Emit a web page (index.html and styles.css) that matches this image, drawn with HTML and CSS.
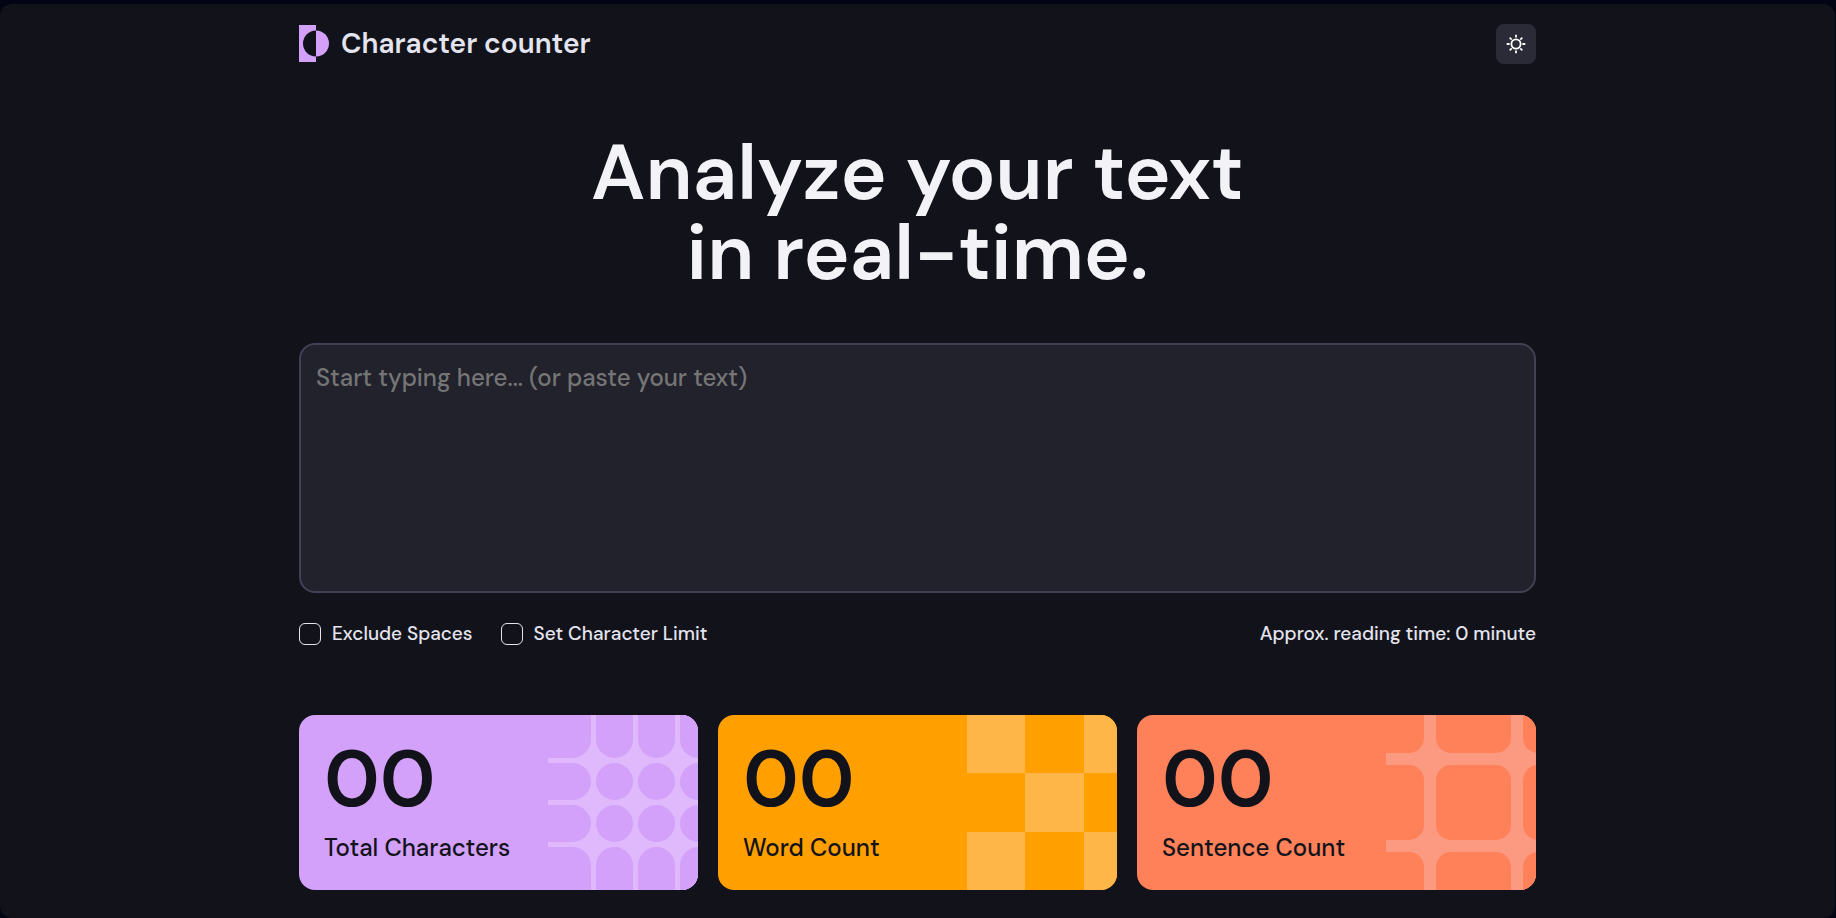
FILE: index.html
```html
<!DOCTYPE html>
<html lang="en">
<head>
  <meta charset="utf-8">
  <meta name="viewport" content="width=device-width, initial-scale=1">
  <title>Character counter</title>
  <link rel="stylesheet" href="styles.css">
</head>
<body>
  <div class="page">
    <div class="container">
      <header class="header">
        <a class="brand" href="#">
          <svg class="brand-mark" width="30" height="38" viewBox="0 0 30 38" aria-hidden="true">
            <path fill="#d3a0fa" fill-rule="evenodd" d="M0 0H17V5.500A13 13 0 0 0 17 31.500V37H0Z"/>
            <path fill="#d3a0fa" d="M17 5.500A13 13 0 0 1 17 31.500Z"/>
          </svg>
          <span class="brand-name">Character counter</span>
        </a>
        <button class="theme-toggle" type="button" aria-label="Toggle theme">
          <svg width="20" height="20" viewBox="0 0 20 20" fill="none" stroke="#fff" stroke-width="1.800" aria-hidden="true">
            <circle cx="10" cy="10" r="4.600"/>
            <path d="M10 .7v2.900M10 16.400v2.900M.7 10h2.900M16.400 10h2.900M3.700 3.700l2 2M14.300 14.300l2 2M3.700 16.300l2-2M14.300 5.700l2-2"/>
          </svg>
        </button>
      </header>

      <main>
        <h1 class="title">Analyze your text<br>in real-time.</h1>
        <textarea class="editor" aria-label="Text to analyze" placeholder="Start typing here... (or paste your text)"></textarea>

        <div class="options">
          <label class="option"><input class="checkbox" type="checkbox">Exclude Spaces</label>
          <label class="option"><input class="checkbox" type="checkbox">Set Character Limit</label>
          <p class="reading-time">Approx. reading time: 0 minute</p>
        </div>

        <section class="cards" aria-label="Statistics">
          <article class="card card-purple">
            <svg class="pattern" viewBox="0 0 150 175" aria-hidden="true">
              <rect class="pattern-light" width="150" height="175"/>
              <g class="pattern-base">
                <rect x="-40" y="-40" width="83" height="83" rx="18.500"/>
                <rect x="48" y="-40" width="37" height="83" rx="18.500"/>
                <rect x="90" y="-40" width="37" height="83" rx="18.500"/>
                <rect x="132" y="-40" width="37" height="83" rx="18.500"/>
                <rect x="-40" y="48" width="83" height="37" rx="18.500"/>
                <circle cx="66.500" cy="66.500" r="18.500"/>
                <circle cx="108.500" cy="66.500" r="18.500"/>
                <circle cx="150.500" cy="66.500" r="18.500"/>
                <rect x="-40" y="90" width="83" height="37" rx="18.500"/>
                <circle cx="66.500" cy="108.500" r="18.500"/>
                <circle cx="108.500" cy="108.500" r="18.500"/>
                <circle cx="150.500" cy="108.500" r="18.500"/>
                <rect x="-40" y="132" width="83" height="83" rx="18.500"/>
                <rect x="48" y="132" width="37" height="83" rx="18.500"/>
                <rect x="90" y="132" width="37" height="83" rx="18.500"/>
                <rect x="132" y="132" width="37" height="83" rx="18.500"/>
              </g>
            </svg>
            <p class="count">00</p>
            <h2 class="card-label">Total Characters</h2>
          </article>
          <article class="card card-orange">
            <svg class="pattern" viewBox="0 0 150 175" aria-hidden="true">
              <path class="pattern-light" d="M0 0h58v58H0zM117 0h33v58h-33zM58 58h59v59H58zM0 117h58v58H0zM117 117h33v58h-33z"/>
            </svg>
            <p class="count">00</p>
            <h2 class="card-label">Word Count</h2>
          </article>
          <article class="card card-coral">
            <svg class="pattern" viewBox="0 0 150 175" aria-hidden="true">
              <rect class="pattern-light" width="150" height="175"/>
              <g class="pattern-base">
                <rect x="-40" y="-40" width="78" height="78" rx="15"/>
                <rect x="50" y="-40" width="75" height="78" rx="15"/>
                <rect x="137" y="-40" width="75" height="78" rx="15"/>
                <rect x="-40" y="50" width="78" height="75" rx="15"/>
                <rect x="50" y="50" width="75" height="75" rx="15"/>
                <rect x="137" y="50" width="75" height="75" rx="15"/>
                <rect x="-40" y="137" width="78" height="78" rx="15"/>
                <rect x="50" y="137" width="75" height="78" rx="15"/>
                <rect x="137" y="137" width="75" height="78" rx="15"/>
              </g>
            </svg>
            <p class="count">00</p>
            <h2 class="card-label">Sentence Count</h2>
          </article>
        </section>
      </main>
    </div>
  </div>
</body>
</html>
```
FILE: styles.css
```css
*, *::before, *::after {
  box-sizing: border-box;
}

body {
  margin: 0;
  padding: 4px 1px 0 0;
  background: #030414;
  color: #e4e4ef;
  font-family: "DM Sans", Inter, "Open Sans", sans-serif;
}

h1, h2, p {
  margin: 0;
}

.page {
  min-height: calc(100vh - 4px);
  padding: 20px 24px 28px;
  border-radius: 12px;
  background: #12131a;
}

.container {
  max-width: 1237px;
  margin: 0 auto;
}

.header {
  display: flex;
  align-items: center;
  justify-content: space-between;
}

.brand {
  display: flex;
  align-items: center;
  gap: 12px;
  color: inherit;
  text-decoration: none;
}

.brand-name {
  font-size: 28px;
  font-weight: 600;
  line-height: 38px;
}

.theme-toggle {
  display: grid;
  place-items: center;
  width: 40px;
  height: 40px;
  padding: 0;
  border: 0;
  border-radius: 8px;
  background: #2a2b37;
}

.title {
  margin: 69px 0 50px;
  color: #f2f2f7;
  font-size: 78px;
  font-weight: 600;
  line-height: 80px;
  text-align: center;
}

.editor {
  display: block;
  width: 100%;
  height: 250px;
  padding: 17px 15px;
  border: 2px solid #404254;
  border-radius: 16px;
  background: #21222c;
  color: inherit;
  font: 500 24px/32px "DM Sans", Inter, "Open Sans", sans-serif;
  resize: none;
}

.editor::placeholder {
  color: #757575;
}

.options {
  display: flex;
  align-items: center;
  gap: 28px;
  margin: 26px 0 66px;
  font-size: 19px;
  font-weight: 500;
  line-height: 30px;
}

.option {
  display: flex;
  align-items: center;
  gap: 11px;
}

.checkbox {
  width: 22px;
  height: 22px;
  margin: 0;
  border: 1px solid #e4e4ef;
  border-radius: 6px;
  appearance: none;
}

.checkbox:checked {
  background: #d3a0fa;
}

.reading-time {
  margin-left: auto;
}

.cards {
  display: grid;
  grid-template-columns: repeat(3, 1fr);
  gap: 20px;
}

.card {
  position: relative;
  overflow: hidden;
  padding: 24px 25px 26px;
  border-radius: 16px;
  background: var(--base);
  color: #12131a;
}

.card-purple {
  --base: #d3a0fa;
  --light: #dfb9fb;
}

.card-orange {
  --base: #ff9f00;
  --light: #ffb649;
}

.card-coral {
  --base: #fe8159;
  --light: #fb9a81;
}

.pattern {
  position: absolute;
  top: 0;
  right: 0;
  height: 100%;
}

.pattern-light {
  fill: var(--light);
}

.pattern-base {
  fill: var(--base);
}

.count,
.card-label {
  position: relative;
}

.count {
  font-size: 80px;
  font-weight: 600;
  line-height: 80px;
}

.card-label {
  margin-top: 13px;
  font-size: 24px;
  font-weight: 500;
  line-height: 32px;
}
```
